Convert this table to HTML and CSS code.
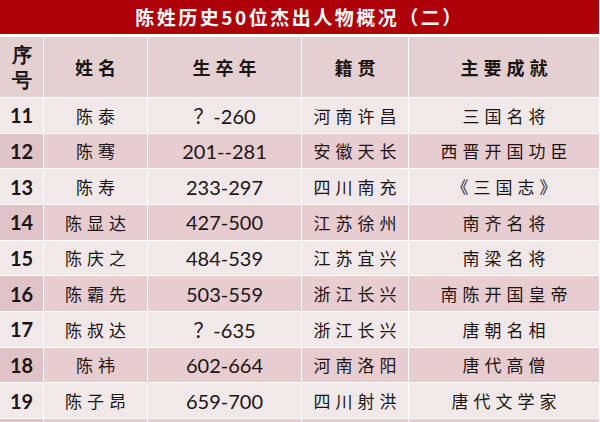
FILE: index.html
```html
<!DOCTYPE html>
<html lang="zh">
<head>
<meta charset="utf-8">
<title>陈姓历史50位杰出人物概况（二）</title>
<link rel="stylesheet" href="styles.css">
</head>
<body>
<div class="page">
  <div class="title">陈姓历史50位杰出人物概况（二）</div>
  <div class="grid">
    <div class="cell head num">序<br>号</div>
    <div class="cell head">姓名</div>
    <div class="cell head">生卒年</div>
    <div class="cell head">籍贯</div>
    <div class="cell head">主要成就</div>

    <div class="cell light num">11</div><div class="cell light zh">陈泰</div><div class="cell light yr">？-260</div><div class="cell light zh">河南许昌</div><div class="cell light zh">三国名将</div>
    <div class="cell dark num first">12</div><div class="cell dark zh">陈骞</div><div class="cell dark yr">201--281</div><div class="cell dark zh">安徽天长</div><div class="cell dark zh">西晋开国功臣</div>
    <div class="cell light num">13</div><div class="cell light zh">陈寿</div><div class="cell light yr">233-297</div><div class="cell light zh">四川南充</div><div class="cell light zh">《三国志》</div>
    <div class="cell dark num first">14</div><div class="cell dark zh">陈显达</div><div class="cell dark yr">427-500</div><div class="cell dark zh">江苏徐州</div><div class="cell dark zh">南齐名将</div>
    <div class="cell light num">15</div><div class="cell light zh">陈庆之</div><div class="cell light yr">484-539</div><div class="cell light zh">江苏宜兴</div><div class="cell light zh">南梁名将</div>
    <div class="cell dark num first">16</div><div class="cell dark zh">陈霸先</div><div class="cell dark yr">503-559</div><div class="cell dark zh">浙江长兴</div><div class="cell dark zh">南陈开国皇帝</div>
    <div class="cell light num">17</div><div class="cell light zh">陈叔达</div><div class="cell light yr">？-635</div><div class="cell light zh">浙江长兴</div><div class="cell light zh">唐朝名相</div>
    <div class="cell dark num first">18</div><div class="cell dark zh">陈祎</div><div class="cell dark yr">602-664</div><div class="cell dark zh">河南洛阳</div><div class="cell dark zh">唐代高僧</div>
    <div class="cell light num">19</div><div class="cell light zh">陈子昂</div><div class="cell light yr">659-700</div><div class="cell light zh">四川射洪</div><div class="cell light zh">唐代文学家</div>
    <div class="cell dark num first"></div><div class="cell dark"></div><div class="cell dark"></div><div class="cell dark"></div><div class="cell dark"></div>
  </div>
</div>
</body>
</html>
```

FILE: styles.css
```css
html, body {
  margin: 0;
  padding: 0;
  background: #ffffff;
  overflow: hidden;
}

.page {
  width: 600px;
  height: 422px;
  overflow: hidden;
  font-family: "Noto Sans CJK SC", "Noto Sans", sans-serif;
  color: #1c1516;
}

.title {
  width: 599px;
  height: 34px;
  margin-bottom: 3px;
  background: #ad0008;
  color: #ffffff;
  font-size: 19px;
  font-weight: 700;
  letter-spacing: 2.5px;
  line-height: 34px;
  text-align: center;
}

.grid {
  width: 599px;
  display: grid;
  grid-template-columns: 43px 103px 153px 106px 190px;
  grid-template-rows: 60px repeat(10, 34.67px);
  gap: 1px;
  background: #ffffff;
}

.cell {
  display: flex;
  align-items: center;
  justify-content: center;
  text-align: center;
  white-space: nowrap;
}

.head {
  background: #e5d0d1;
  font-size: 18px;
  font-weight: 700;
  letter-spacing: 5px;
  padding-left: 5px;
}

.head.num {
  line-height: 25px;
  letter-spacing: 0;
  padding-left: 0;
}

.light {
  background: #f1e8e9;
}

.dark {
  background: #e7ccd0;
}

.dark.first {
  background: #dfc3c7;
}

.num {
  font-family: "Lato", "Open Sans", sans-serif;
  font-size: 20px;
  font-weight: 700;
}

.zh {
  font-size: 17px;
  letter-spacing: 5px;
  padding-left: 5px;
}

.yr {
  font-family: "Lato", "Noto Sans CJK SC", sans-serif;
  font-size: 20px;
}
```
